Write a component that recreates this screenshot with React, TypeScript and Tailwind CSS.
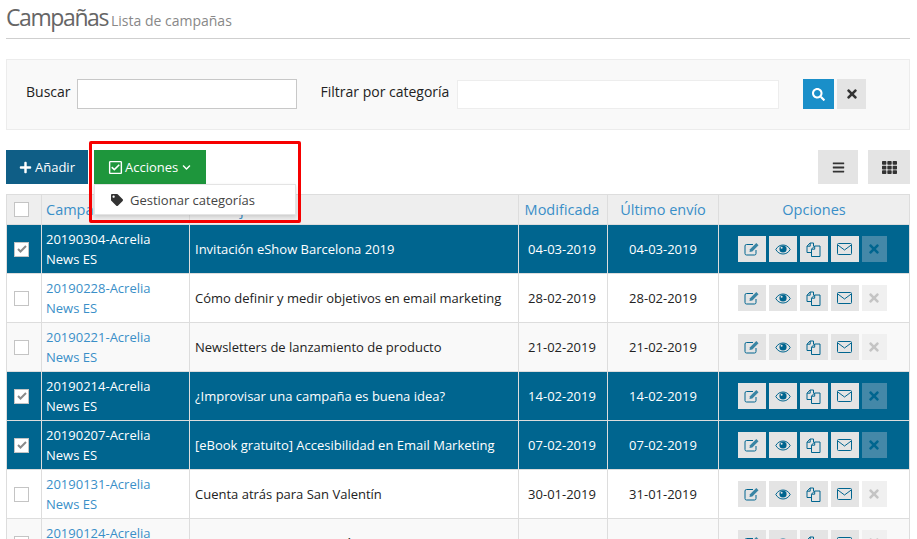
import { FaBars, FaChevronDown, FaPlus, FaRegCheckSquare, FaSearch, FaTag, FaTh, FaTimes } from "react-icons/fa";

const rows = [
  { code: "20190304-Acrelia", msg: "Invitación eShow Barcelona 2019", mod: "04-03-2019", sent: "04-03-2019", on: true },
  { code: "20190228-Acrelia", msg: "Cómo definir y medir objetivos en email marketing", mod: "28-02-2019", sent: "28-02-2019", on: false },
  { code: "20190221-Acrelia", msg: "Newsletters de lanzamiento de producto", mod: "21-02-2019", sent: "21-02-2019", on: false },
  { code: "20190214-Acrelia", msg: "¿Improvisar una campaña es buena idea?", mod: "14-02-2019", sent: "14-02-2019", on: true },
  { code: "20190207-Acrelia", msg: "[eBook gratuito] Accesibilidad en Email Marketing", mod: "07-02-2019", sent: "07-02-2019", on: true },
  { code: "20190131-Acrelia", msg: "Cuenta atrás para San Valentín", mod: "30-01-2019", sent: "31-01-2019", on: false },
  { code: "20190124-Acrelia", msg: "Trucos para conseguir más aperturas", mod: "24-01-2019", sent: "24-01-2019", on: false },
];

function EditIcon() {
  return (
    <svg width="16" height="14" viewBox="0 0 16 14" fill="none" stroke="currentColor">
      <path d="M12 8v3.500a1.500 1.500 0 0 1-1.500 1.500H2.500A1.500 1.500 0 0 1 1 11.500V4a1.500 1.500 0 0 1 1.500-1.500H9" />
      <path d="M5.500 10l.5-2.800L12.300 1l2.200 2.200-6.200 6.300z" fill="currentColor" fillOpacity="0.75" stroke="none" />
    </svg>
  );
}

function EyeIcon() {
  return (
    <svg width="16" height="11" viewBox="0 0 16 11" fill="none" stroke="currentColor">
      <path d="M.8 5.500C2.500 2.500 5 1 8 1s5.500 1.500 7.200 4.500C13.500 8.500 11 10 8 10S2.500 8.500.8 5.500z" />
      <circle cx="8" cy="5" r="3.600" fill="currentColor" stroke="none" />
      <circle cx="6.600" cy="3.800" r="1" fill="#e6e6e6" stroke="none" />
    </svg>
  );
}

function FilesIcon() {
  return (
    <svg width="15" height="15" viewBox="0 0 15 15" fill="none" stroke="currentColor">
      <path d="M5.500 10.500H1V4.200L4 1h3.500v3.200" />
      <path d="M4.200 1v3.200H1" />
      <path d="M5.500 7.200L8.500 4h5.500v10.500H5.500z" />
      <path d="M8.700 4v3.200H5.500" />
    </svg>
  );
}

function MailIcon() {
  return (
    <svg width="15" height="12" viewBox="0 0 15 12" fill="none" stroke="currentColor">
      <rect x="0.500" y="0.500" width="14" height="11" rx="1" />
      <path d="M0.800 2l6.700 5 6.700-5" />
    </svg>
  );
}

function Check({ on }: { on: boolean }) {
  return (
    <span className="flex h-[15px] w-[15px] items-center justify-center border border-[#c4c4c4] bg-white">
      {on && (
        <svg width="10" height="8" viewBox="0 0 10 8" fill="none" stroke="#8a8a8a" strokeWidth="2">
          <path d="M1 4l2.500 2.500L9 1" />
        </svg>
      )}
    </span>
  );
}

function OptButton({ children }: { children: React.ReactNode }) {
  return <span className="flex h-[26px] w-[28px] items-center justify-center bg-[#e4e4e4] text-[#00658f]">{children}</span>;
}

export default function App() {
  return (
    <div className="relative h-[539px] overflow-hidden bg-white pl-[6px] pr-[7px] text-[13px] text-[#222]" style={{ fontFamily: '"Open Sans", sans-serif' }}>
      <header className="flex h-[39px] items-baseline gap-[5px] border-b border-[#cfcfcf] pt-[1px]">
        <h1 className="w-[100px] text-[23px] leading-[33px] tracking-[-1.4px] text-[#666]">Campañas</h1>
        <span className="text-[14px] text-[#888]">Lista de campañas</span>
      </header>

      <section className="mt-[20px] flex h-[71px] items-center border border-[#ececec] bg-[#f9f9f9] pb-[1px] pl-[19px]">
        <label className="mb-[6px] text-[14px]">Buscar</label>
        <input className="ml-[6px] h-[30px] w-[220px] border border-[#c8c8c8] bg-white" />
        <label className="mb-[6px] ml-[24px] text-[14px]">Filtrar por categoría</label>
        <input className="ml-[8px] h-[29px] w-[322px] border border-[#ededed] bg-white" />
        <button className="ml-[24px] flex h-[30px] w-[31px] items-center justify-center bg-[#1a8fc9] text-white">
          <FaSearch size={13} />
        </button>
        <button className="ml-[3px] flex h-[30px] w-[29px] items-center justify-center bg-[#e4e4e4] text-[#333]">
          <FaTimes size={14} />
        </button>
      </section>

      <div className="mt-[20px] flex h-[34px] items-stretch">
        <button className="flex w-[82px] items-center gap-[3px] bg-[#0f5e86] pl-[13px] pt-[1px] text-white">
          <FaPlus size={13} />
          Añadir
        </button>
        <button className="ml-[6px] flex w-[112px] items-center gap-[2px] bg-[#1e963c] pl-[14px] pt-[1px] text-white">
          <FaRegCheckSquare size={15} />
          Acciones
          <FaChevronDown size={9} className="ml-[2px]" />
        </button>
        <button className="ml-auto flex w-[40px] items-center justify-center bg-[#e4e4e4] text-[#333]">
          <FaBars size={13} />
        </button>
        <button className="ml-[10px] flex w-[42px] items-center justify-center bg-[#e4e4e4] text-[#333]">
          <FaTh size={15} />
        </button>
      </div>

      <table className="mt-[10px] w-full table-fixed border-collapse border border-[#ddd]">
        <colgroup>
          <col className="w-[35px]" />
          <col className="w-[148px]" />
          <col className="w-[329px]" />
          <col className="w-[89px]" />
          <col className="w-[111px]" />
          <col />
        </colgroup>
        <thead>
          <tr className="h-[30px] bg-[#eeeeee] text-[14.5px] font-normal text-[#3a8fc8]">
            <th className="border border-[#ddd] pl-[7px] font-normal">
              <Check on={false} />
            </th>
            <th className="border border-[#ddd] pl-[4px] text-left font-normal">Campaña</th>
            <th className="border border-[#ddd] pl-[5px] text-left font-normal">Mensaje</th>
            <th className="border border-[#ddd] pr-[2px] font-normal">Modificada</th>
            <th className="border border-[#ddd] font-normal">Último envío</th>
            <th className="border border-[#ddd] font-normal">Opciones</th>
          </tr>
        </thead>
        <tbody>
          {rows.map((r, i) => (
            <tr key={r.code} className={r.on ? "h-[49px] bg-[#00658f] text-white" : i % 2 === 1 ? "h-[49px] bg-white" : "h-[49px] bg-[#f9f9f9]"}>
              <td className="border border-[#ddd] pl-[7px]">
                <Check on={r.on} />
              </td>
              <td className={r.on ? "border border-[#ddd] pl-[4px] leading-[20px]" : "border border-[#ddd] pl-[4px] leading-[20px] text-[#3a8fc8]"}>
                {r.code}
                <br />
                News ES
              </td>
              <td className="truncate border border-[#ddd] pl-[5px] pt-[2px]">{r.msg}</td>
              <td className="border border-[#ddd] pr-[2px] pt-[2px] text-center">{r.mod}</td>
              <td className="border border-[#ddd] pt-[2px] text-center">{r.sent}</td>
              <td className="border border-[#ddd] pr-[4px]">
                <div className="flex justify-center gap-[3px]">
                  <OptButton><EditIcon /></OptButton>
                  <OptButton><EyeIcon /></OptButton>
                  <OptButton><FilesIcon /></OptButton>
                  <OptButton><MailIcon /></OptButton>
                  {r.on ? (
                    <span className="flex h-[26px] w-[25px] items-center justify-center bg-[#4488a8] text-[#00658f]"><FaTimes size={14} /></span>
                  ) : (
                    <span className="flex h-[26px] w-[25px] items-center justify-center bg-[#f0f0f0] text-[#c4c4c4]"><FaTimes size={14} /></span>
                  )}
                </div>
              </td>
            </tr>
          ))}
        </tbody>
      </table>

      <div className="absolute left-[94px] top-[184px] flex h-[31px] w-[202px] items-center gap-[7px] border border-[#e4e4e4] bg-white pl-[16px] pt-[3px] text-[#444] shadow-[0_2px_4px_rgba(0,0,0,0.15)]">
        <FaTag size={12} className="-mt-[2px] text-[#333]" />
        Gestionar categorías
      </div>
      <div className="pointer-events-none absolute left-[89px] top-[141px] h-[82px] w-[212px] rounded-[2px] border-[3px] border-[#f60000]" />
    </div>
  );
}
